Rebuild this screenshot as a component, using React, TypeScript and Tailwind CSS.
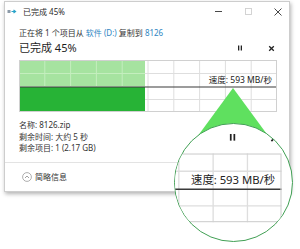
const font = "font-['Noto_Sans','Noto_Sans_CJK_SC',sans-serif]";

function SpeedGraph() {
  const w = 258;
  const h = 52;
  const fill = 126;
  const cols = [1, 2, 3, 4, 5, 6, 7, 8, 9].map((k) => (k * w) / 10);
  return (
    <svg width={w} height={h} viewBox={`0 0 ${w} ${h}`} className="block">
      <rect x="0" y="0" width={w} height={h} fill="#ffffff" />
      <rect x="0" y="0" width={fill} height="26.5" fill="#a6e3a0" />
      <rect x="0" y="27" width={fill} height={h - 27} fill="#27b336" />
      {cols.map((x) => (
        <g key={x}>
          {x < fill ? (
            <line x1={x} y1="0" x2={x} y2="26.5" stroke="#c4eebe" strokeWidth="1" />
          ) : (
            <line x1={x} y1="0" x2={x} y2={h} stroke="#dedede" strokeWidth="1" />
          )}
        </g>
      ))}
      <line x1="0" y1="13.5" x2={fill} y2="13.5" stroke="#c4eebe" strokeWidth="1" />
      <line x1={fill} y1="13.5" x2={w} y2="13.5" stroke="#dedede" strokeWidth="1" />
      <line x1={fill} y1="39.5" x2={w} y2="39.5" stroke="#dedede" strokeWidth="1" />
      <line x1="0" y1="27" x2={w} y2="27" stroke="#3a3a3a" strokeWidth="1.2" />
      <rect x="0.5" y="0.5" width={w - 1} height={h - 1} fill="none" stroke="#d0d0d0" strokeWidth="1" />
    </svg>
  );
}

// row with the percentage + pause/cancel, then the speed graph
function ProgressBlock({ showLabel = true }: { showLabel?: boolean }) {
  return (
    <>
      <div className="flex h-[14px] items-center justify-between">
        {showLabel ? (
          <span className="text-[11px] leading-[14px] text-[#1e1e1e]">已完成 45%</span>
        ) : (
          <span />
        )}
        <div className="mr-[2px] flex items-center">
          <svg width="8" height="8" viewBox="0 0 8 8">
            <rect x="2" y="1.5" width="1.3" height="5" fill="#222" />
            <rect x="4.7" y="1.5" width="1.3" height="5" fill="#222" />
          </svg>
          <svg width="7" height="7" viewBox="0 0 7 7" className="ml-[24px]">
            <path d="M1.2 1.2 L5.8 5.8 M5.8 1.2 L1.2 5.8" stroke="#222" strokeWidth="1.3" />
          </svg>
        </div>
      </div>
      <div className="relative mt-[5px]">
        <SpeedGraph />
        <span className="absolute right-[5px] top-[14px] text-[8.5px] leading-[11px] text-[#222]">
          速度: 593 MB/秒
        </span>
      </div>
    </>
  );
}

function Dialog() {
  return (
    <div className={`ml-[4px] mt-[1px] flex h-[191px] w-[286px] flex-col border border-[#cdcdcd] bg-white shadow-[1px_2px_4px_rgba(0,0,0,0.3)] ${font}`}>
      {/* title bar */}
      <div className="flex h-[19px] items-center pl-[2px]">
        <svg width="10" height="8" viewBox="0 0 10 8" className="mr-[6px]">
          <rect x="0.5" y="2" width="3" height="3" fill="#8c9aa8" />
          <path d="M4.5 3.5 L8 3.5 M6.5 2 L8.5 3.5 L6.5 5" stroke="#29a3c9" strokeWidth="1.2" fill="none" />
        </svg>
        <span className="text-[8px] leading-none text-[#2b2b2b]">已完成 45%</span>
        <div className="ml-auto flex items-center pr-[6px]">
          <svg width="7" height="7" viewBox="0 0 7 7">
            <line x1="0" y1="3.5" x2="7" y2="3.5" stroke="#333" strokeWidth="0.9" />
          </svg>
          <svg width="7" height="7" viewBox="0 0 7 7" className="ml-[23px]">
            <rect x="0.5" y="0.5" width="6" height="6" fill="none" stroke="#cfcfcf" strokeWidth="0.9" />
          </svg>
          <svg width="10" height="10" viewBox="0 0 10 10" className="ml-[21px]">
            <path d="M1.5 1.5 L8.5 8.5 M8.5 1.5 L1.5 8.5" stroke="#333" strokeWidth="0.9" />
          </svg>
        </div>
      </div>

      {/* body */}
      <div className="pl-[14px] pr-[12px]">
        <p className="mt-[6px] text-[8px] leading-[11px] text-[#333]">
          正在将 1 个项目从 <span className="text-[#2f86c2]">软件 (D:)</span> 复制到{' '}
          <span className="text-[#2f86c2]">8126</span>
        </p>
        <div className="mt-[3px]">
          <ProgressBlock />
        </div>
        <div className="mt-[7px] text-[8px] leading-[11.5px] text-[#333]">
          <p>名称: 8126.zip</p>
          <p>剩余时间: 大约 5 秒</p>
          <p>剩余项目: 1 (2.17 GB)</p>
        </div>
      </div>

      {/* footer */}
      <div className="mt-auto flex h-[29px] items-center border-t border-[#e3e3e3] pl-[17px]">
        <svg width="10" height="10" viewBox="0 0 10 10" className="mr-[3px]">
          <circle cx="5" cy="5" r="4.4" fill="none" stroke="#9a9a9a" strokeWidth="0.8" />
          <path d="M3 6 L5 4 L7 6" fill="none" stroke="#8a8a8a" strokeWidth="0.8" />
        </svg>
        <span className="text-[8px] leading-none text-[#333]">简略信息</span>
      </div>
    </div>
  );
}

export default function App() {
  return (
    <div className="relative h-[249px] w-[300px] overflow-hidden bg-white">
      <Dialog />

      {/* magnifier */}
      <svg width="300" height="249" viewBox="0 0 300 249" className="pointer-events-none absolute left-0 top-0">
        <polygon points="233,88 186,152 280,152" fill="#5fe05f" />
      </svg>
      <div className="absolute left-[174px] top-[123px] h-[119px] w-[119px] overflow-hidden rounded-full border-[1.5px] border-[#42a055] bg-white">
        <div className={`absolute left-[-255px] top-[4px] w-[284px] origin-top-left scale-[1.33] pl-[14px] pr-[12px] ${font}`}>
          <ProgressBlock showLabel={false} />
        </div>
      </div>
    </div>
  );
}
